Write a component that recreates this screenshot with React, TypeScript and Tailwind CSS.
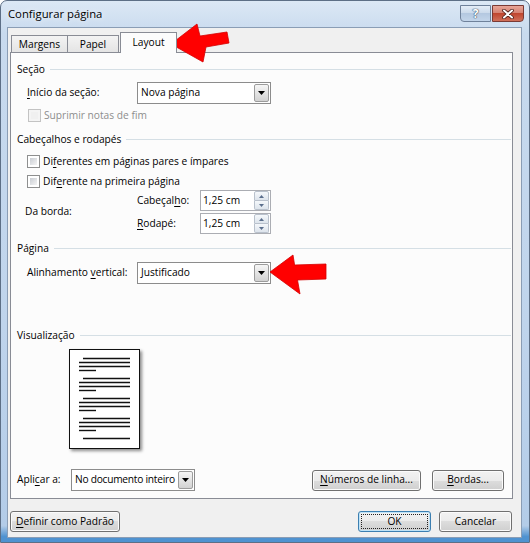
import React from "react";

const U = ({ children }: { children: React.ReactNode }) => (
  <span className="underline underline-offset-[1.5px] decoration-[1px]">{children}</span>
);

const GroupHeader = ({ title, className }: { title: string; className: string }) => (
  <div className={`h-[14px] flex items-center gap-[5px] pl-[6px] pr-[1px] ${className}`}>
    <span className="leading-none">{title}</span>
    <div className="flex-1 h-px bg-[#d5dfe5]" />
  </div>
);

const Checkbox = ({ disabled }: { disabled?: boolean }) => (
  <div
    className={`w-[13px] h-[13px] shrink-0 border p-[2px] ${
      disabled ? "border-[#c3c3c3] bg-[#f4f4f4]" : "border-[#8e8f8f] bg-white"
    }`}
  >
    <div
      className={`w-full h-full ${
        disabled ? "bg-[#f0f0f0]" : "bg-[linear-gradient(135deg,#c9cdd3,#f4f4f4)]"
      }`}
    />
  </div>
);

const Select = ({
  value,
  className,
  textClass = "",
}: {
  value: string;
  className: string;
  textClass?: string;
}) => (
  <div className={`h-[22px] border border-[#8c8c8c] bg-white flex items-center ${className}`}>
    <span className={`flex-1 pl-[3px] whitespace-nowrap overflow-hidden ${textClass}`}>{value}</span>
    <div className="w-[15px] h-[18px] shrink-0 mr-[1px] border border-[#9c9c9c] rounded-[2px] bg-[linear-gradient(to_bottom,#f6f6f6,#e4e4e4_50%,#d2d2d2)] flex items-center justify-center">
      <svg width="7" height="4" viewBox="0 0 7 4">
        <path d="M0 0h7L3.5 4z" fill="#000" />
      </svg>
    </div>
  </div>
);

const Spin = ({ value }: { value: string }) => (
  <div className="w-[71px] h-[21px] border border-[#abadb3] bg-white flex items-center">
    <span className="flex-1 pl-[2px] whitespace-nowrap">{value}</span>
    <div className="w-[15px] h-[19px] mr-[1px] flex flex-col">
      <div className="flex-1 border border-[#b9c1cc] rounded-t-[2px] bg-[linear-gradient(to_bottom,#f5f8fb,#dde4ec)] flex items-center justify-center">
        <svg width="5" height="3" viewBox="0 0 5 3">
          <path d="M0 3h5L2.5 0z" fill="#5a6e8c" />
        </svg>
      </div>
      <div className="flex-1 border border-t-0 border-[#b9c1cc] rounded-b-[2px] bg-[linear-gradient(to_bottom,#f5f8fb,#dde4ec)] flex items-center justify-center">
        <svg width="5" height="3" viewBox="0 0 5 3">
          <path d="M0 0h5L2.5 3z" fill="#5a6e8c" />
        </svg>
      </div>
    </div>
  </div>
);

const Btn = ({ children, className }: { children: React.ReactNode; className: string }) => (
  <div
    className={`h-[21px] shrink-0 flex items-center justify-center border border-[#707070] rounded-[3px] bg-[linear-gradient(to_bottom,#f2f2f2_0%,#ebebeb_50%,#dddddd_50%,#cfcfcf_100%)] shadow-[inset_0_0_0_1px_#fbfbfb] whitespace-nowrap ${className}`}
  >
    {children}
  </div>
);

const PreviewPage = () => {
  const groups = [0, 20, 40, 60];
  const lines: { x1: number; x2: number; y: number }[] = [];
  groups.forEach((g) => {
    lines.push({ x1: 13, x2: 60, y: 8.5 + g });
    lines.push({ x1: 9, x2: 60, y: 12.5 + g });
    lines.push({ x1: 9, x2: 60, y: 16.5 + g });
    lines.push({ x1: 9, x2: 26, y: 20.5 + g });
  });
  lines.push({ x1: 13, x2: 60, y: 88.5 });
  return (
    <div className="w-[71px] h-[100px] ml-[58px] mt-[7px] border border-[#111] bg-white shadow-[2px_2px_3px_rgba(0,0,0,0.45)]">
      <svg width="69" height="98" viewBox="0 0 69 98">
        {lines.map((l, i) => (
          <line key={i} x1={l.x1} x2={l.x2} y1={l.y} y2={l.y} stroke="#111" strokeWidth="1.4" />
        ))}
      </svg>
    </div>
  );
};

export default function App() {
  return (
    <div className="relative w-[530px] h-[543px] overflow-hidden bg-white font-['Open_Sans',sans-serif] text-[10.2px] text-black">
      <div className="w-[530px] h-[543px] flex flex-col rounded-t-[7px] border border-[#5d6f86] bg-[linear-gradient(to_bottom,#dce8f5_0%,#c8daee_6%,#bfd4ec_60%,#b3cce8_97%,#4f92d0_99%)]">
        {/* title bar */}
        <div className="h-[26px] shrink-0 flex items-start pl-[7px] pr-[5px]">
          <span className="mt-[5px] text-[11.3px] leading-[15px] [text-shadow:0_0_6px_#ffffff]">
            Configurar página
          </span>
          <div className="ml-auto mt-[4px] flex gap-px">
            <div className="w-[31px] h-[17px] border border-[#6f819a] rounded-bl-[4px] bg-[linear-gradient(to_bottom,#e4edf7,#c9d8ea_50%,#b4c8e0_50%,#c3d5ea)] flex items-center justify-center">
              <span className="text-[12px] font-bold leading-none text-white [text-shadow:0_0_1px_#3a4c66,0_0_1px_#3a4c66,0_0_1px_#3a4c66]">
                ?
              </span>
            </div>
            <div className="w-[32px] h-[17px] border border-[#7a3a34] rounded-br-[4px] bg-[linear-gradient(to_bottom,#e8a597,#d47f6f_50%,#c0462f_50%,#d0705a)] flex items-center justify-center">
              <svg width="12" height="10" viewBox="0 0 12 10">
                <path d="M2 1.5L10 8.5M10 1.5L2 8.5" stroke="#4a1d17" strokeWidth="3.6" strokeLinecap="round" />
                <path d="M2 1.5L10 8.5M10 1.5L2 8.5" stroke="#ffffff" strokeWidth="2" strokeLinecap="round" />
              </svg>
            </div>
          </div>
        </div>

        {/* client */}
        <div className="flex-1 ml-[6px] mr-[7px] mb-[4px] border border-[#8a9db5] bg-[#f0f0f0] flex flex-col">
          {/* tabs */}
          <div className="mt-[4px] h-[21px] pl-[3px] flex items-end relative z-10 -mb-[1px]">
            <div className="w-[57px] h-[17px] mb-[1px] pt-[1px] border border-b-0 border-[#898c95] bg-[linear-gradient(to_bottom,#f3f3f3,#e4e4e4)] flex items-center justify-center">
              Margens
            </div>
            <div className="w-[51px] h-[17px] mb-[1px] pt-[1px] border border-l-0 border-b-0 border-[#898c95] bg-[linear-gradient(to_bottom,#f3f3f3,#e4e4e4)] flex items-center justify-center">
              Papel
            </div>
            <div className="w-[57px] h-[21px] ml-[1px] border border-b-0 border-[#898c95] bg-[#fcfcfc] flex items-center justify-center">
              Layout
            </div>
          </div>

          {/* panel */}
          <div className="ml-[2px] w-[503px] h-[447px] border border-[#898c95] bg-[#fcfcfc] flex flex-col">
            <GroupHeader title="Seção" className="mt-[9px]" />
            <div className="mt-[6px] h-[22px] pl-[16px] flex items-center">
              <span className="w-[110px]">
                <U>I</U>nício da seção:
              </span>
              <Select value="Nova página" className="w-[134px]" />
            </div>
            <div className="mt-[5px] h-[13px] pl-[17px] flex items-center">
              <Checkbox disabled />
              <span className="ml-[3px] text-[#8d8d8d]">Suprimir notas de fim</span>
            </div>

            <GroupHeader title="Cabeçalhos e rodapés" className="mt-[10px]" />
            <div className="mt-[9px] h-[13px] pl-[16px] flex items-center">
              <Checkbox />
              <span className="ml-[3px]">
                Di<U>f</U>erentes em páginas pares e ímpares
              </span>
            </div>
            <div className="mt-[7px] h-[13px] pl-[16px] flex items-center">
              <Checkbox />
              <span className="ml-[3px]">
                Dif<U>e</U>rente na primeira página
              </span>
            </div>
            <div className="mt-[2px] pl-[14px] flex items-center">
              <span className="w-[112px]">Da borda:</span>
              <div className="flex flex-col gap-[2px]">
                <div className="h-[21px] flex items-center">
                  <span className="w-[63px]">
                    Cabeçal<U>h</U>o:
                  </span>
                  <Spin value="1,25 cm" />
                </div>
                <div className="h-[21px] flex items-center">
                  <span className="w-[63px]">
                    <U>R</U>odapé:
                  </span>
                  <Spin value="1,25 cm" />
                </div>
              </div>
            </div>

            <GroupHeader title="Página" className="mt-[7px]" />
            <div className="mt-[7px] h-[22px] pl-[16px] flex items-center">
              <span className="w-[110px]">
                Alinhamento <U>v</U>ertical:
              </span>
              <Select value="Justificado" className="w-[134px]" />
            </div>

            <GroupHeader title="Visualização" className="mt-[44px]" />
            <PreviewPage />

            <div className="mt-[20px] h-[22px] pl-[6px] pr-[8px] flex items-center">
              <span className="w-[54px]">
                Apli<U>c</U>ar a:
              </span>
              <Select value="No documento inteiro" className="w-[124px]" textClass="tracking-[-0.25px]" />
              <div className="flex-1" />
              <Btn className="w-[109px]">
                <span>
                  <U>N</U>úmeros de linha...
                </span>
              </Btn>
              <Btn className="w-[72px] ml-[11px]">
                <span>
                  <U>B</U>ordas...
                </span>
              </Btn>
            </div>
          </div>

          {/* bottom buttons */}
          <div className="mt-[12px] pl-[2px] pr-[9px] flex items-center">
            <Btn className="w-[110px]">
              <span>
                <U>D</U>efinir como Padrão
              </span>
            </Btn>
            <div className="flex-1" />
            <div className="w-[73px] h-[21px] p-[2px] flex border border-[#3c7fb1] rounded-[3px] bg-[linear-gradient(to_bottom,#f2f2f2_0%,#ebebeb_50%,#dddddd_50%,#cfcfcf_100%)] shadow-[inset_0_0_0_1px_#bfe3f7]">
              <div className="flex-1 border border-dotted border-[#222] flex items-center justify-center">
                OK
              </div>
            </div>
            <Btn className="w-[73px] ml-[8px]">Cancelar</Btn>
          </div>
        </div>
      </div>

      {/* red arrows */}
      <svg className="absolute left-0 top-0 pointer-events-none" width="530" height="543" viewBox="0 0 530 543">
        <polygon
          points="171,44 197,24 200,36 227,32 229,43 206,47 203,62"
          fill="#ff0000"
          stroke="#d40000"
          strokeWidth="0.8"
          strokeLinejoin="round"
        />
        <polygon
          points="270,272 293,255 294.6,265 326,264 326,279 297.5,280 300,294"
          fill="#ff0000"
          stroke="#d40000"
          strokeWidth="0.8"
          strokeLinejoin="round"
        />
      </svg>
    </div>
  );
}
